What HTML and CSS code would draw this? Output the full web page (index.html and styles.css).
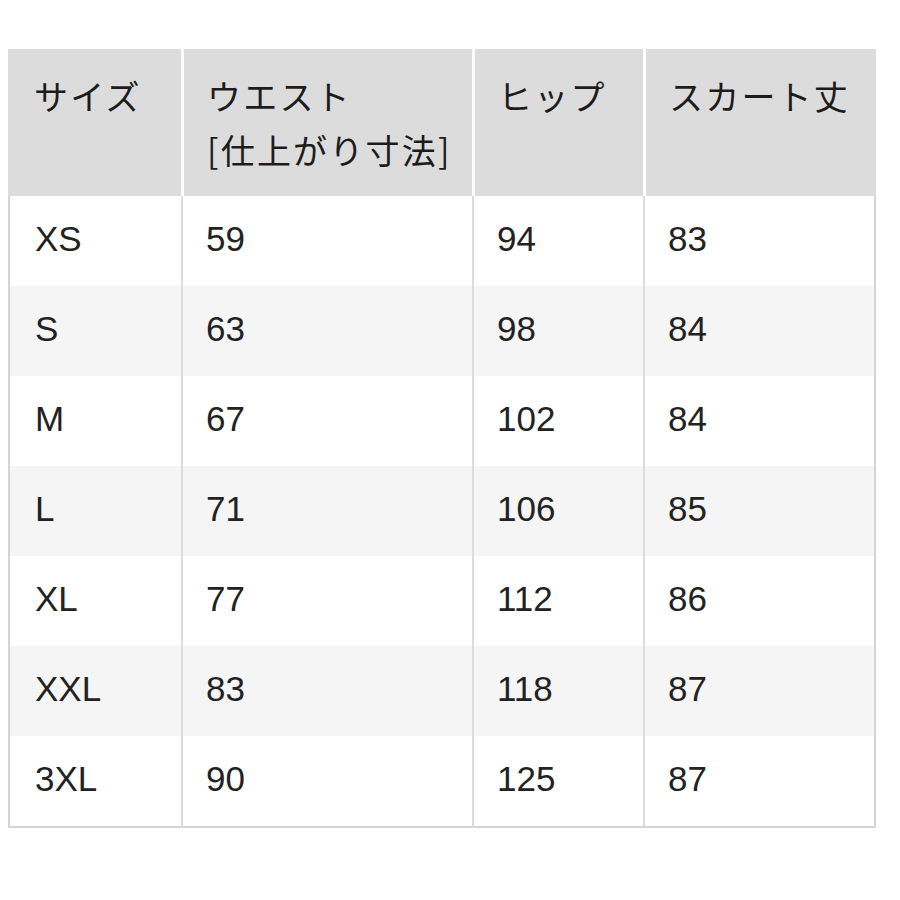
FILE: index.html
```html
<!DOCTYPE html>
<html lang="ja">
<head>
<meta charset="utf-8">
<link rel="stylesheet" href="styles.css">
</head>
<body>
<div class="wrap">
<table class="size-table">
<colgroup>
<col class="c1"><col class="c2"><col class="c3"><col class="c4">
</colgroup>
<thead>
<tr><th>サイズ</th><th>ウエスト<br>[仕上がり寸法]</th><th>ヒップ</th><th>スカート丈</th></tr>
</thead>
<tbody>
<tr><td>XS</td><td>59</td><td>94</td><td>83</td></tr>
<tr><td>S</td><td>63</td><td>98</td><td>84</td></tr>
<tr><td>M</td><td>67</td><td>102</td><td>84</td></tr>
<tr><td>L</td><td>71</td><td>106</td><td>85</td></tr>
<tr><td>XL</td><td>77</td><td>112</td><td>86</td></tr>
<tr><td>XXL</td><td>83</td><td>118</td><td>87</td></tr>
<tr><td>3XL</td><td>90</td><td>125</td><td>87</td></tr>
</tbody>
</table>
</div>
</body>
</html>
```
FILE: styles.css
```css
html, body {
  margin: 0;
  padding: 0;
  background: #fff;
}
.wrap {
  padding: 49px 24px 0 8px;
}
.size-table {
  width: 868px;
  border-collapse: separate;
  border-spacing: 0;
  table-layout: fixed;
  font-family: "Noto Sans CJK JP", "Noto Sans", sans-serif;
  color: #1c1c1c;
}
.c1 { width: 173px; }
.c2 { width: 291px; }
.c3 { width: 171px; }
.c4 { width: 233px; }
.size-table th {
  background: #dcdcdc;
  font-weight: 400;
  font-size: 34px;
  letter-spacing: 2.2px;
  line-height: 54px;
  text-align: left;
  vertical-align: top;
  padding: 20px 4px 19px 23px;
  height: 108px;
  box-sizing: content-box;
  border-left: 3px solid #fff;
}
.size-table th:first-child {
  border-left: none;
  padding-left: 26px;
}
.size-table td {
  font-family: "Liberation Sans", "Noto Sans CJK JP", sans-serif;
  font-size: 35px;
  height: 90px;
  padding: 0 10px 4px 23px;
  box-sizing: border-box;
  vertical-align: middle;
  border-left: 2px solid #dcdcdc;
  color: #222;
}
.size-table td:first-child {
  border-left: 2px solid #d4d4d4;
  padding-left: 25px;
}
.size-table td:last-child {
  border-right: 2px solid #d4d4d4;
}
.size-table tbody tr:nth-child(even) td {
  background: #f5f5f5;
}
.size-table tbody tr:last-child td {
  border-bottom: 2px solid #d4d4d4;
  height: 92px;
}
```
